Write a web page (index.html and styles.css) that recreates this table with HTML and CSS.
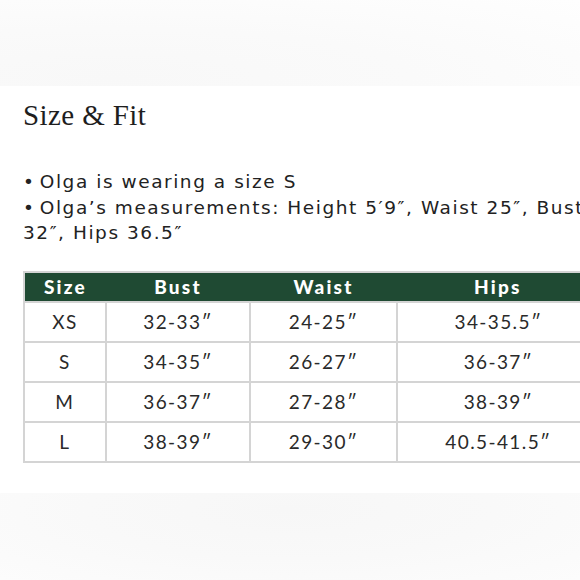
FILE: index.html
```html
<!DOCTYPE html>
<html>
<head>
<meta charset="utf-8">
<link rel="stylesheet" href="styles.css">
</head>
<body>
<div class="band band-top"></div>
<main class="content">
  <h2 class="title">Size &amp; Fit</h2>
  <ul class="notes">
    <li>Olga is wearing a size S</li>
    <li>Olga’s measurements: Height 5′9″, Waist 25″, Bust 32″, Hips 36.5″</li>
  </ul>
  <table class="sizes">
    <colgroup>
      <col class="c-size"><col class="c-bust"><col class="c-waist"><col class="c-hips">
    </colgroup>
    <thead>
      <tr><th class="first">Size</th><th>Bust</th><th>Waist</th><th class="last">Hips</th></tr>
    </thead>
    <tbody>
      <tr><td>XS</td><td>32-33″</td><td>24-25″</td><td>34-35.5″</td></tr>
      <tr><td>S</td><td>34-35″</td><td>26-27″</td><td>36-37″</td></tr>
      <tr><td>M</td><td>36-37″</td><td>27-28″</td><td>38-39″</td></tr>
      <tr><td>L</td><td>38-39″</td><td>29-30″</td><td>40.5-41.5″</td></tr>
    </tbody>
  </table>
</main>
<div class="band band-bottom"></div>
</body>
</html>
```
FILE: styles.css
```css
html, body {
  margin: 0;
  padding: 0;
  background: #ffffff;
  overflow: hidden;
  width: 580px;
  height: 580px;
}
.band {
  width: 580px;
}
.band-top {
  height: 86px;
  background: radial-gradient(ellipse at 20% 90%, #f8f8f8 0%, #fafafa 45%, #fefefe 100%);
}
.band-bottom {
  height: 87px;
  background: radial-gradient(ellipse at 50% 20%, #f7f7f7 0%, #f9f9f9 50%, #fcfcfc 100%);
}
.content {
  height: 407px;
  padding-left: 23px;
  box-sizing: border-box;
  width: 620px;
  color: #222;
}
.title {
  margin: 0;
  padding-top: 12px;
  font-family: "Liberation Serif", serif;
  font-weight: normal;
  font-size: 29px;
  line-height: 34px;
  letter-spacing: 0.4px;
  color: #1e1e1e;
}
.notes {
  list-style: none;
  margin: 0;
  padding: 0;
  padding-top: 37px;
  width: 585px;
  font-family: "DejaVu Sans", sans-serif;
  font-size: 18.5px;
  line-height: 25.5px;
  letter-spacing: 1.55px;
  color: #222;
}
.notes li::before {
  content: "• ";
  letter-spacing: 0;
}
.sizes {
  margin-top: 25px;
  border-collapse: collapse;
  width: 578px;
  font-family: "Lato", sans-serif;
  font-size: 19px;
  letter-spacing: 1.4px;
  color: #2a2a2a;
  text-align: center;
}
.c-size { width: 82px; }
.c-bust { width: 145px; }
.c-waist { width: 147px; }
.c-hips { width: 204px; }
.sizes th {
  background: #1f4a33;
  color: #fff;
  font-weight: 900;
  font-size: 19px;
  letter-spacing: 2.2px;
  height: 28px;
  padding: 0;
  border-top: 2px solid #d4d4d4;
  border-bottom: 2px solid #d4d4d4;
  border-left: none;
  border-right: none;
}
.sizes th.first {
  border-left: 2px solid #d4d4d4;
}
.sizes th.last {
  border-right: 2px solid #d4d4d4;
}
.sizes td {
  height: 38px;
  padding: 0;
  border: 2px solid #d4d4d4;
}
```
